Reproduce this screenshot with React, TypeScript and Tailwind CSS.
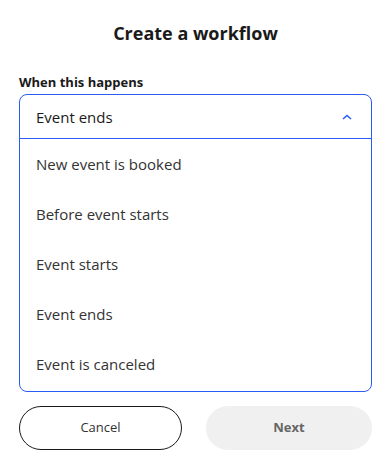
import { useState } from "react";

const options = ["New event is booked", "Before event starts", "Event starts", "Event ends", "Event is canceled"];

export default function App() {
  const [selected, setSelected] = useState("Event ends");

  return (
    <div className="w-[391px] h-[474px] bg-white px-[19px] font-['Open_Sans',sans-serif] text-[#1a1a1a]">
      <h1 className="pt-[22px] text-center text-[18px] font-bold leading-[22px]">Create a workflow</h1>

      <label className="mt-[30px] block text-[13px] font-bold leading-[16px]">When this happens</label>

      <div className="mt-[4px] rounded-[8px] border border-[#2a5cf6]">
        <button className="flex h-[44px] w-full items-center justify-between border-b border-[#2a5cf6] pl-[16px] pr-[19px] text-[15px] leading-[18px]">
          <span>{selected}</span>
          <svg width="10" height="6" viewBox="0 0 10 6" fill="none">
            <path d="M1 5L5 1.5L9 5" stroke="#2a5cf6" strokeWidth="1.6" />
          </svg>
        </button>
        <ul className="pb-[2px]">
          {options.map((o) => (
            <li key={o}>
              <button
                onClick={() => setSelected(o)}
                className="flex h-[50px] w-full items-center pl-[16px] text-left text-[15px] leading-[18px] text-[#333]"
              >
                {o}
              </button>
            </li>
          ))}
        </ul>
      </div>

      <div className="mt-[14px] flex gap-[24px]">
        <button className="h-[44px] w-[163px] rounded-full border border-[#1a1a1a] text-[13px] text-[#333]">Cancel</button>
        <button className="h-[44px] flex-1 rounded-full bg-[#f0f0f0] text-[13px] font-bold text-[#666]">Next</button>
      </div>
    </div>
  );
}
